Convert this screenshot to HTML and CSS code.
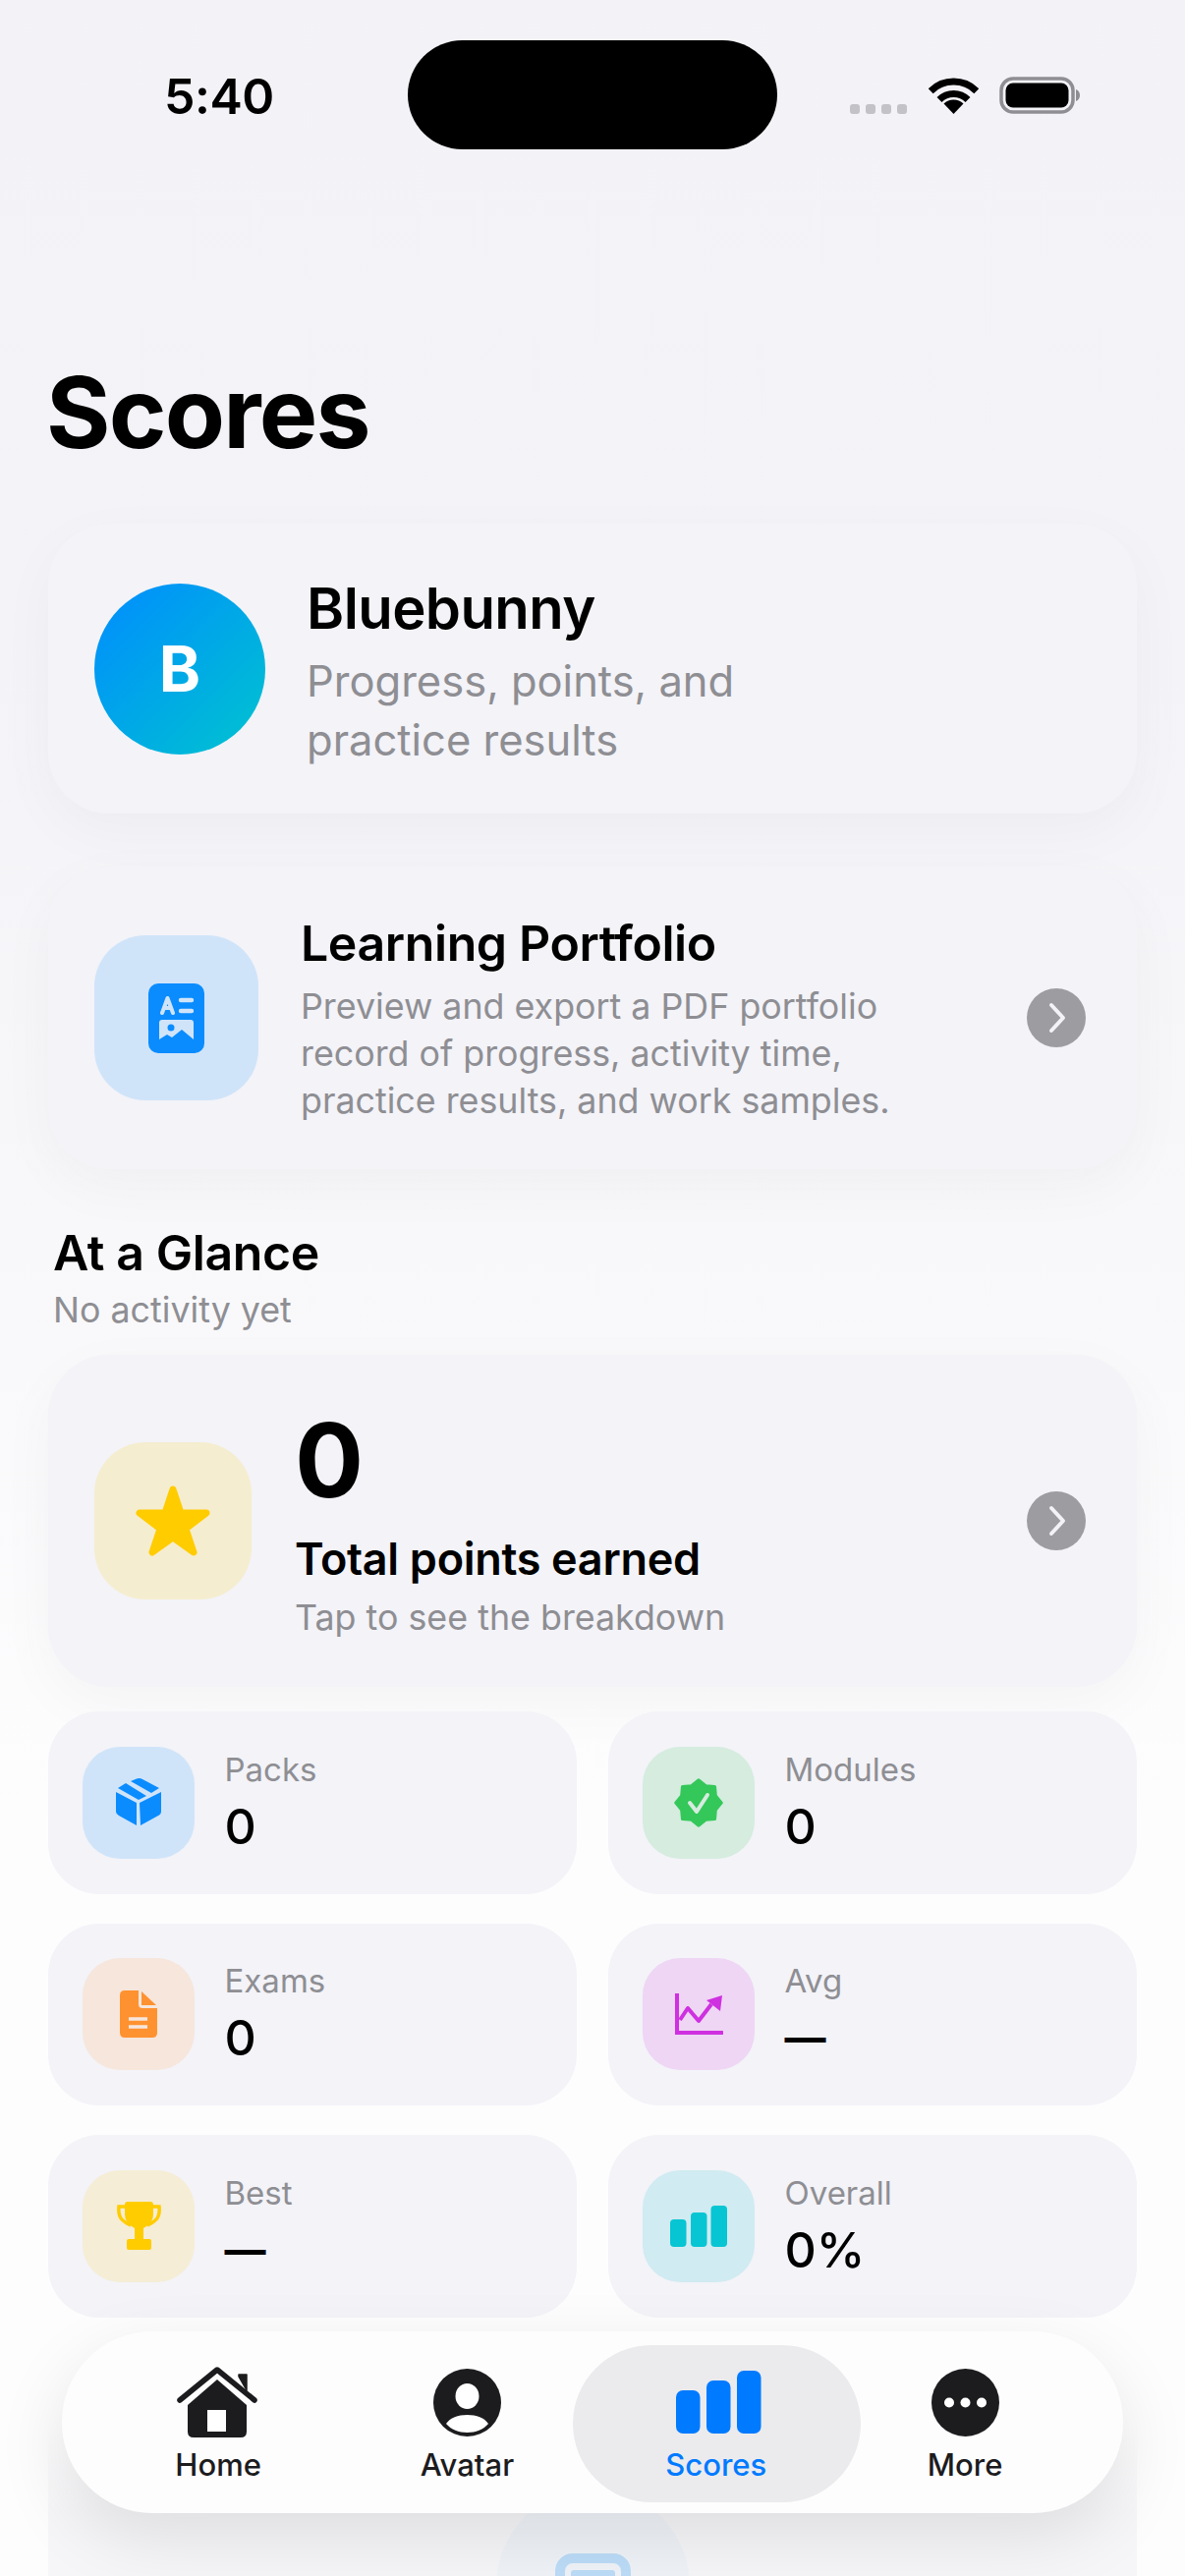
FILE: index.html
```html
<!DOCTYPE html>
<html lang="en">
<head>
<meta charset="utf-8">
<title>Scores</title>
<link rel="stylesheet" href="styles.css">
</head>
<body>
<div class="screen">
  <header class="status">
    <span class="time">5:40</span>
    <div class="island"></div>
    <div class="status-icons">
      <div class="signal"><i></i><i></i><i></i><i></i></div>
      <svg class="wifi" viewBox="0 0 51 37"><path d="M2.2 13.7A33 33 0 0 1 48.8 13.7M11 22.5A20.5 20.5 0 0 1 40 22.5" fill="none" stroke="#000" stroke-width="7"/><path d="M25.5 37L15.5 26.5A14.5 14.5 0 0 1 35.5 26.5Z"/></svg>
      <svg class="battery" viewBox="0 0 84 38"><rect x="2" y="2" width="73" height="34" rx="12" fill="none" stroke="#8e8e93" stroke-width="3.5"/><rect x="6.5" y="6.5" width="64" height="25" rx="7.5"/><path d="M78 13C81 14 82 16.500 82 19S81 24 78 25Z" fill="#8e8e93"/></svg>
    </div>
  </header>

  <h1 class="page-title">Scores</h1>

  <section class="card profile">
    <div class="avatar">B</div>
    <div class="profile-text">
      <h2 class="profile-name">Bluebunny</h2>
      <p class="profile-sub">Progress, points, and practice results</p>
    </div>
  </section>

  <section class="card portfolio">
    <div class="tile tile-blue">
      <svg class="ic-portfolio" viewBox="0 0 57 71"><rect width="57" height="71" rx="10" fill="#0a8cff"/><path d="M14 30L19.500 15L25 30M16 25H23" fill="none" stroke="#d0e4f9" stroke-width="4" stroke-linecap="round" stroke-linejoin="round"/><path d="M33 17H44M33 28H44" stroke="#d0e4f9" stroke-width="4.400" stroke-linecap="round"/><path d="M11 40Q11 37 14 37H43Q46 37 46 40V57L34 47L24 55L19 52L11 57Z" fill="#d0e4f9"/><circle cx="23" cy="45" r="3.500" fill="#0a8cff"/></svg>
    </div>
    <div class="portfolio-text">
      <h2 class="portfolio-title">Learning Portfolio</h2>
      <p class="portfolio-sub">Preview and export a PDF portfolio record of progress, activity time, practice results, and work samples.</p>
    </div>
    <svg class="chevron" viewBox="0 0 60 60"><circle cx="30" cy="30" r="30" fill="#9c9ca1"/><path d="M25 17L37 30L25 43" fill="none" stroke="#f2f2f7" stroke-width="4" stroke-linecap="round" stroke-linejoin="round"/></svg>
  </section>

  <div class="glance-head">
    <h2 class="glance-title">At a Glance</h2>
    <p class="glance-sub">No activity yet</p>
  </div>

  <section class="card points">
    <div class="tile tile-gold">
      <svg class="ic-star" viewBox="0 0 76 72"><path d="M38 4L46 28L72 28L51 44L59 68L38 53L17 68L25 44L4 28L30 28Z" fill="#ffcc00" stroke="#ffcc00" stroke-width="7" stroke-linejoin="round"/></svg>
    </div>
    <div class="points-text">
      <div class="points-num">0</div>
      <div class="points-label">Total points earned</div>
      <div class="points-hint">Tap to see the breakdown</div>
    </div>
    <svg class="chevron" viewBox="0 0 60 60"><circle cx="30" cy="30" r="30" fill="#9c9ca1"/><path d="M25 17L37 30L25 43" fill="none" stroke="#f2f2f7" stroke-width="4" stroke-linecap="round" stroke-linejoin="round"/></svg>
  </section>

  <section class="stats">
    <article class="stat">
      <div class="mini t-blue"><svg class="ic-box" viewBox="0 0 46 49" fill="#0a8cff"><path d="M0 14L21 25V48L3 38Q0 36.500 0 34Z"/><path d="M24 25L46 14V34Q46 36.500 44 37.500L25 48Z"/><path d="M2 10L10 5L31 18L23 22Z"/><path d="M15 3L21 .5Q24 -.5 27 1L44 10L36 15Z"/></svg></div>
      <div class="stat-text"><span class="stat-label">Packs</span><span class="stat-value">0</span></div>
    </article>
    <article class="stat">
      <div class="mini t-green"><svg class="ic-badge" viewBox="0 0 50 50"><path d="M25 2L32.100 7.900L41.300 8.700L42.100 17.900L48 25L42.100 32.100L41.300 41.300L32.100 42.100L25 48L17.900 42.100L8.700 41.300L7.900 32.100L2 25L7.900 17.900L8.700 8.700L17.900 7.900Z" fill="#34c759" stroke="#34c759" stroke-width="3.500" stroke-linejoin="round"/><path d="M16 25L23 34L34 17" fill="none" stroke="#d5ecdf" stroke-width="4" stroke-linecap="round" stroke-linejoin="round"/></svg></div>
      <div class="stat-text"><span class="stat-label">Modules</span><span class="stat-value">0</span></div>
    </article>
    <article class="stat">
      <div class="mini t-orange"><svg class="ic-doc" viewBox="0 0 38 48" fill="#ff9230"><path d="M5 0H19V14Q19 18 23 18H38V43Q38 48 33 48H5Q0 48 0 43V5Q0 0 5 0Z"/><path d="M22 1L37 15H22Z"/><path d="M9 29H28M9 37H28" stroke="#f6e6dc" stroke-width="3.500"/></svg></div>
      <div class="stat-text"><span class="stat-label">Exams</span><span class="stat-value">0</span></div>
    </article>
    <article class="stat">
      <div class="mini t-purple"><svg class="ic-chart" viewBox="0 0 49 43"><path d="M2 0V40H48" fill="none" stroke="#cf30e0" stroke-width="4" stroke-linecap="round"/><path d="M5 27L13 15L24 28L37 11" fill="none" stroke="#cf30e0" stroke-width="4" stroke-linejoin="round"/><path d="M32 7L48 2L46 18Z" fill="#cf30e0"/></svg></div>
      <div class="stat-text"><span class="stat-label">Avg</span><span class="stat-value stat-dash">—</span></div>
    </article>
    <article class="stat">
      <div class="mini t-gold"><svg class="ic-trophy" viewBox="0 0 45 49" fill="#ffcc00"><path d="M11 0H34Q37 0 37 3V13Q37 22 27 27V38H33Q35 38 35 40V47Q35 49 33 49H12Q10 49 10 47V40Q10 38 12 38H18V27Q8 22 8 13V3Q8 0 11 0Z"/><path d="M9 5H2Q1 15 6 19T14 24M36 5H43Q44 15 39 19T31 24" fill="none" stroke="#ffcc00" stroke-width="3.500"/></svg></div>
      <div class="stat-text"><span class="stat-label">Best</span><span class="stat-value stat-dash">—</span></div>
    </article>
    <article class="stat">
      <div class="mini t-teal"><svg class="ic-bars" viewBox="0 0 58 42" fill="#07c5d3"><rect y="14" width="16.500" height="28" rx="4"/><rect x="21" y="7" width="16.500" height="35" rx="4"/><rect x="41.500" width="16.500" height="42" rx="4"/></svg></div>
      <div class="stat-text"><span class="stat-label">Overall</span><span class="stat-value">0%</span></div>
    </article>
  </section>

  <section class="ghost-card">
    <div class="ghost-circle">
      <div class="ghost-icon"><i></i></div>
    </div>
  </section>

  <nav class="tabbar">
    <a class="tab">
      <span class="tab-icon"><svg class="ic-home" viewBox="0 0 82 72"><path d="M63 10V8H71V24Z" fill="#1c1c1e" stroke="#1c1c1e" stroke-width="1.500" stroke-linejoin="round"/><path d="M3 34L41 3L79 34" fill="none" stroke="#1c1c1e" stroke-width="5.500" stroke-linecap="round" stroke-linejoin="round"/><path d="M41 13L71 39V66Q71 72 65 72H17Q11 72 11 66V39Z" fill="#1c1c1e"/><rect x="31" y="44" width="19" height="22" fill="#fff"/></svg></span>
      <span class="tab-label">Home</span>
    </a>
    <a class="tab">
      <span class="tab-icon"><svg class="ic-user" viewBox="0 0 69 69"><circle cx="34.500" cy="34.500" r="34.500" fill="#1c1c1e"/><ellipse cx="34.500" cy="28" rx="12" ry="13" fill="#fff"/><path d="M13 56C17 50 25 47 34.500 47S52 50 56 56C51 62 43 65 34.500 65S18 62 13 56Z" fill="#fff"/></svg></span>
      <span class="tab-label">Avatar</span>
    </a>
    <a class="tab tab-active">
      <span class="tab-icon"><svg class="ic-scores" viewBox="0 0 87 64" fill="#007aff"><rect y="20" width="24.500" height="44" rx="7"/><rect x="31" y="10" width="24.500" height="54" rx="7"/><rect x="62" width="24.500" height="64" rx="7"/></svg></span>
      <span class="tab-label">Scores</span>
    </a>
    <a class="tab">
      <span class="tab-icon"><svg class="ic-user" viewBox="0 0 69 69"><circle cx="34.500" cy="34.500" r="34.500" fill="#1c1c1e"/><circle cx="18" cy="34.500" r="5" fill="#fff"/><circle cx="34.500" cy="34.500" r="5" fill="#fff"/><circle cx="51" cy="34.500" r="5" fill="#fff"/></svg></span>
      <span class="tab-label">More</span>
    </a>
  </nav>
</div>
</body>
</html>
```
FILE: styles.css
```css
* { box-sizing: border-box; }
html, body { margin: 0; padding: 0; }
body { font-family: "Inter", "Liberation Sans", sans-serif; color: #000; background: #fff; }
h1, h2, p { margin: 0; }

.screen {
  position: relative;
  width: 1206px;
  height: 2622px;
  overflow: hidden;
  padding: 0 49px;
  background: linear-gradient(180deg, #f2f2f7 0, #f3f3f8 600px, #f8f8fa 1250px, #fdfdfe 1850px, #fdfdfe 2622px);
}

/* status bar */
.status { height: 360px; padding-top: 41px; display: flex; align-items: flex-start; position: relative; }
.time { position: absolute; left: 118px; top: 69px; font-size: 50px; line-height: 58px; font-weight: 600; letter-spacing: -.5px; }
.island { position: absolute; left: 366px; top: 41px; width: 376px; height: 111px; border-radius: 56px; background: #000; }
.status-icons { position: absolute; left: 816px; top: 78px; width: 236px; height: 38px; display: flex; align-items: flex-end; }
.signal { display: flex; gap: 6px; height: 10px; align-self: flex-end; }
.signal i { display: block; width: 10px; height: 10px; border-radius: 3px; background: #c2c2c7; }
.wifi { width: 51px; height: 37px; margin-left: 22px; }
.battery { width: 84px; height: 38px; margin-left: 21px; }

.page-title { font-size: 100px; line-height: 120px; font-weight: 700; letter-spacing: -1.8px; margin: 0 0 53px -2px; }

/* cards */
.card { background: #f3f3f8; display: flex; align-items: center; border-radius: 62px; box-shadow: 0 18px 60px rgba(0, 0, 0, .035); }
.profile { height: 295px; padding-left: 47px; gap: 42px; margin-bottom: 54px; }
.avatar { width: 174px; height: 174px; flex: none; border-radius: 50%; background: linear-gradient(135deg, #008cff, #00c4cf); color: #fff; font-size: 64px; font-weight: 700; display: flex; align-items: center; justify-content: center; }
.profile-text { width: 500px; padding-top: 5px; }
.profile-name { font-size: 58px; line-height: 70px; font-weight: 600; letter-spacing: -.6px; margin-bottom: 9px; }
.profile-sub { font-size: 43.500px; line-height: 60px; color: #8e8e93; }

.portfolio { height: 308px; padding-left: 47px; margin-bottom: 53px; position: relative; }
.tile { flex: none; display: flex; align-items: center; justify-content: center; border-radius: 52px; }
.tile-blue { width: 167px; height: 168px; background: #d0e4f9; }
.tile-gold { width: 160px; height: 160px; background: #f5edcf; }
.ic-portfolio { width: 57px; height: 71px; }
.ic-star { width: 76px; height: 72px; }
.portfolio-text { width: 680px; margin-left: 43px; padding-top: 2px; }
.portfolio-title { font-size: 50px; line-height: 60px; font-weight: 600; letter-spacing: -.4px; margin-bottom: 10px; }
.portfolio-sub { font-size: 35.800px; line-height: 48px; color: #8e8e93; }
.chevron { width: 60px; height: 60px; flex: none; margin-left: auto; margin-right: 52px; }

.glance-head { padding: 2px 0 0 5px; margin-bottom: 23px; }
.glance-title { font-size: 50px; line-height: 60px; font-weight: 600; letter-spacing: -.4px; margin-bottom: 5px; }
.glance-sub { font-size: 35.800px; line-height: 46px; color: #8e8e93; }

.points { height: 338px; padding-left: 47px; margin-bottom: 25px; }
.points-text { margin-left: 44px; display: flex; flex-direction: column; }
.points-num { font-size: 104px; line-height: 116px; font-weight: 700; }
.points-label { font-size: 45px; line-height: 54px; font-weight: 600; margin-top: 16px; letter-spacing: -.3px; }
.points-hint { font-size: 35.800px; line-height: 46px; color: #8e8e93; margin-top: 9px; }

/* stat grid */
.stats { display: grid; grid-template-columns: 538px 538px; gap: 30px 32px; }
.stat { height: 185.500px; background: #f3f3f8; border-radius: 52px; display: flex; align-items: center; padding-left: 35px; gap: 30.500px; }
.mini { width: 114px; height: 114px; flex: none; border-radius: 38px; display: flex; align-items: center; justify-content: center; }
.t-blue { background: #d0e4f9; }
.t-green { background: #d5ecdf; }
.t-orange { background: #f6e6dc; }
.t-purple { background: #eed6f4; }
.t-gold { background: #f5edd5; }
.t-teal { background: #d0ebf1; }
.ic-box { width: 46px; height: 49px; }
.ic-badge { width: 50px; height: 50px; }
.ic-doc { width: 38px; height: 48px; }
.ic-chart { width: 49px; height: 43px; }
.ic-trophy { width: 45px; height: 49px; }
.ic-bars { width: 58px; height: 42px; }
.stat-text { display: flex; flex-direction: column; }
.stat-label { font-size: 33px; line-height: 40px; color: #8e8e93; }
.stat-value { font-size: 50px; line-height: 60px; font-weight: 500; margin-top: 8px; }
.stat-dash { font-size: 42px; font-weight: 700; }

/* content passing behind the tab bar */
.ghost-card { height: 300px; margin-top: 30px; background: linear-gradient(180deg, rgba(246, 246, 248, 0) 80px, #f6f6f8 170px); border-radius: 52px; display: flex; justify-content: center; padding-top: 144px; }
.ghost-circle { width: 197px; height: 197px; border-radius: 50%; background: #eff3f8; display: flex; justify-content: center; padding-top: 66px; }
.ghost-icon { width: 77px; height: 77px; border: 10px solid #bcdcf7; border-radius: 18px; padding: 7px 6px; }
.ghost-icon i { display: block; height: 30px; background: #bcdcf7; border-radius: 3px; }

/* tab bar overlays the scroll content */
.tabbar { position: absolute; left: 63px; top: 2373px; width: 1080px; height: 185px; background: #fdfdfe; border-radius: 92px; box-shadow: 0 24px 70px rgba(0, 0, 0, .1); display: grid; grid-template-columns: repeat(4, 253.300px); padding: 35px 0 0 32.500px; }
.tab { position: relative; display: flex; flex-direction: column; align-items: center; gap: 9px; color: #1c1c1e; }
.tab-active { color: #007aff; }
.tab-active::before { content: ""; position: absolute; left: -19px; right: -21px; top: -21px; height: 160px; border-radius: 80px; background: #ebebed; }
.tab-icon { position: relative; height: 74px; display: flex; align-items: center; }
.tab-label { position: relative; font-size: 31px; line-height: 36px; font-weight: 500; }
.ic-home { width: 82px; height: 72px; margin-left: -2px; }
.ic-user { width: 69px; height: 69px; }
.ic-scores { width: 87px; height: 64px; margin-left: 5px; }
```
